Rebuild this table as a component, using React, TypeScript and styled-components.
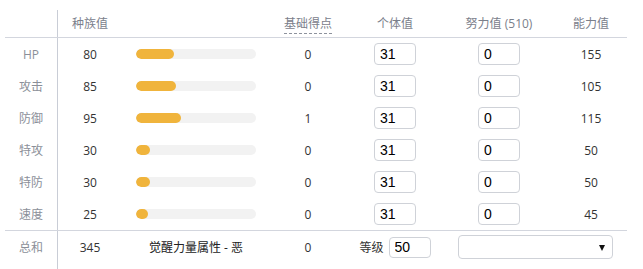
import React from "react";
import styled, { createGlobalStyle } from "styled-components";

const Global = createGlobalStyle`
  html, body { margin: 0; padding: 0; background: #fff; }
  body {
    font-family: "Open Sans", "Noto Sans CJK SC", sans-serif;
    font-size: 12px;
    color: #333;
    overflow: hidden;
  }
`;

const COLS = "52px 66px 146px 78px 96px 112px 72px";
const LINE = "#d3d6de";

const Page = styled.div`
  padding: 10px 0 0 5px;
  height: 269px;
  box-sizing: border-box;
`;

const Table = styled.div`
  width: 622px;
  height: 100%;
  background: linear-gradient(#c9cdd6, #c9cdd6) no-repeat 52px 0 / 1px 100%;
`;

const Row = styled.div<{ $h: number; $border?: boolean }>`
  display: grid;
  grid-template-columns: ${COLS};
  height: ${(p) => p.$h}px;
  align-items: center;
  border-bottom: ${(p) => (p.$border ? `1px solid ${LINE}` : "none")};
`;

const HeadCell = styled.div`
  text-align: center;
  color: #7b808b;
  font-size: 12px;
  line-height: 14px;
`;

const Dashed = styled.span`
  border-bottom: 1px dashed #8d929c;
  padding-bottom: 1px;
`;

const Label = styled.div`
  text-align: center;
  color: #8b8f99;
`;

const Num = styled.div`
  text-align: center;
  color: #333;
`;

const Text = styled.div`
  text-align: center;
  color: #222;
  white-space: nowrap;
`;

const BarTrack = styled.div`
  justify-self: center;
  width: 120px;
  height: 10px;
  border-radius: 5px;
  background: #f2f2f2;
  overflow: hidden;
`;

const BarFill = styled.div`
  height: 100%;
  border-radius: 5px;
  background: #f0b43c;
`;

const Field = styled.input<{ $w: number; $h: number }>`
  justify-self: center;
  box-sizing: border-box;
  width: ${(p) => p.$w}px;
  height: ${(p) => p.$h}px;
  border: 1px solid #cfd2d8;
  border-radius: 4px;
  padding: 0 0 0 5px;
  margin: 0;
  font-family: "Liberation Sans", Arial, sans-serif;
  font-size: 14px;
  color: #000;
  background: #fff;
  outline: none;
`;

const Level = styled.div`
  display: flex;
  align-items: center;
  justify-content: center;
  gap: 5px;
  color: #333;
`;

const SelectWrap = styled.div`
  grid-column: span 2;
  justify-self: center;
  position: relative;
  width: 155px;
  height: 24px;
  &::after {
    content: "";
    position: absolute;
    right: 8px;
    top: 10px;
    border-left: 3.5px solid transparent;
    border-right: 3.5px solid transparent;
    border-top: 6px solid #111;
  }
`;

const Select = styled.select`
  appearance: none;
  width: 100%;
  height: 100%;
  box-sizing: border-box;
  border: 1px solid #cfd2d8;
  border-radius: 4px;
  background: #fff;
  outline: none;
`;

const stats = [
  { name: "HP", base: 80, pts: 0, iv: 31, ev: 0, val: 155 },
  { name: "攻击", base: 85, pts: 0, iv: 31, ev: 0, val: 105 },
  { name: "防御", base: 95, pts: 1, iv: 31, ev: 0, val: 115 },
  { name: "特攻", base: 30, pts: 0, iv: 31, ev: 0, val: 50 },
  { name: "特防", base: 30, pts: 0, iv: 31, ev: 0, val: 50 },
  { name: "速度", base: 25, pts: 0, iv: 31, ev: 0, val: 45 },
];

export default function App() {
  const total = stats.reduce((s, x) => s + x.base, 0);
  return (
    <Page>
      <Global />
      <Table>
        <Row $h={27} $border>
          <HeadCell />
          <HeadCell>种族值</HeadCell>
          <HeadCell />
          <HeadCell>
            <Dashed>基础得点</Dashed>
          </HeadCell>
          <HeadCell>个体值</HeadCell>
          <HeadCell>努力值 (510)</HeadCell>
          <HeadCell>能力值</HeadCell>
        </Row>
        {stats.map((s, i) => (
          <Row key={s.name} $h={i === stats.length - 1 ? 32 : 32} $border={i === stats.length - 1}>
            <Label>{s.name}</Label>
            <Num>{s.base}</Num>
            <BarTrack>
              <BarFill style={{ width: `${(s.base / 255) * 120}px` }} />
            </BarTrack>
            <Num>{s.pts}</Num>
            <Field $w={42} $h={22} defaultValue={String(s.iv)} />
            <Field $w={42} $h={22} defaultValue={String(s.ev)} />
            <Num>{s.val}</Num>
          </Row>
        ))}
        <Row $h={32}>
          <Label>总和</Label>
          <Num>{total}</Num>
          <Text>觉醒力量属性 - 恶</Text>
          <Num>0</Num>
          <Level>
            等级
            <Field $w={42} $h={21} defaultValue="50" />
          </Level>
          <SelectWrap>
            <Select defaultValue="">
              <option value=""></option>
            </Select>
          </SelectWrap>
        </Row>
      </Table>
    </Page>
  );
}
